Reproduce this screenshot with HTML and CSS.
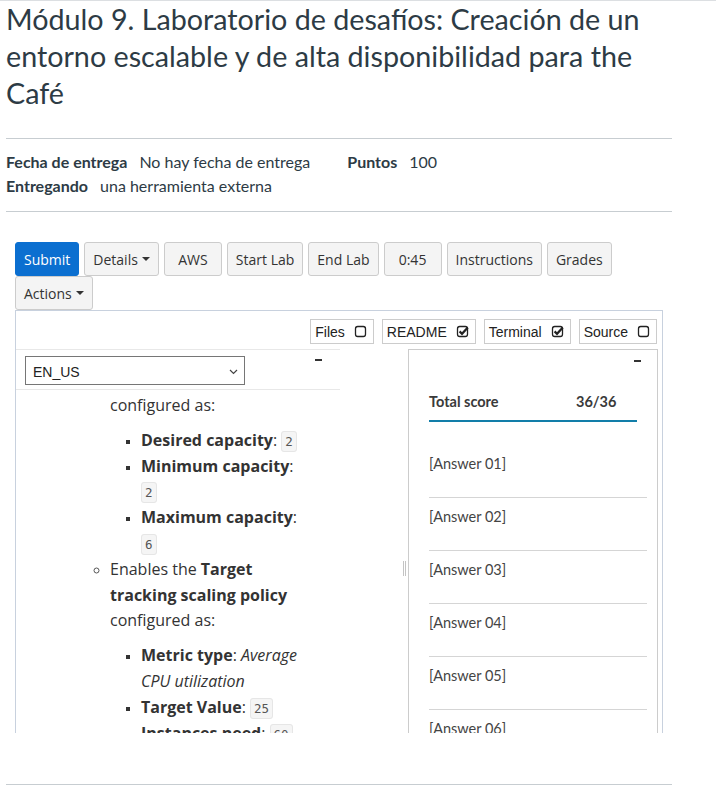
FILE: index.html
```html
<!DOCTYPE html>
<html lang="es">
<head>
<meta charset="utf-8">
<title>Módulo 9</title>
<link rel="stylesheet" href="styles.css">
</head>
<body>
<div class="page">
  <h1 class="title">Módulo 9. Laboratorio de desafíos: Creación de un entorno escalable y de alta disponibilidad para the Café</h1>
  <hr class="rule rule-top">
  <div class="meta">
    <div class="meta-row">
      <span class="meta-item"><span class="label">Fecha de entrega</span><span class="value">No hay fecha de entrega</span></span>
      <span class="meta-item"><span class="label">Puntos</span><span class="value">100</span></span>
    </div>
    <div class="meta-row">
      <span class="meta-item"><span class="label">Entregando</span><span class="value">una herramienta externa</span></span>
    </div>
  </div>
  <hr class="rule rule-mid">
  <div class="lab">
    <div class="toolbar">
      <span class="btn primary">Submit</span>
      <span class="btn">Details<span class="caret"></span></span>
      <span class="btn wide">AWS</span>
      <span class="btn">Start Lab</span>
      <span class="btn">End Lab</span>
      <span class="btn wide">0:45</span>
      <span class="btn">Instructions</span>
      <span class="btn">Grades</span>
      <span class="btn">Actions<span class="caret"></span></span>
    </div>
    <div class="frame">
      <div class="panel-bar">
        <span class="toggle">Files <svg class="cb" width="13" height="13" viewBox="0 0 13 13"><rect x="1.5" y="1.5" width="10" height="10" rx="2.2" fill="none" stroke="#222" stroke-width="1.3"/></svg></span>
        <span class="toggle">README <svg class="cb" width="13" height="13" viewBox="0 0 13 13"><rect x="1.5" y="1.5" width="10" height="10" rx="2.2" fill="none" stroke="#222" stroke-width="1.3"/><path d="M3.6 6.4 L6 8.8 L11.8 2.4" fill="none" stroke="#222" stroke-width="2.2"/></svg></span>
        <span class="toggle">Terminal <svg class="cb" width="13" height="13" viewBox="0 0 13 13"><rect x="1.5" y="1.5" width="10" height="10" rx="2.2" fill="none" stroke="#222" stroke-width="1.3"/><path d="M3.6 6.4 L6 8.8 L11.8 2.4" fill="none" stroke="#222" stroke-width="2.2"/></svg></span>
        <span class="toggle">Source <svg class="cb" width="13" height="13" viewBox="0 0 13 13"><rect x="1.5" y="1.5" width="10" height="10" rx="2.2" fill="none" stroke="#222" stroke-width="1.3"/></svg></span>
      </div>
      <div class="workspace">
        <div class="left">
          <div class="left-head">
            <div class="select"><span>EN_US</span><svg width="9" height="6" viewBox="0 0 9 6"><path d="M1 1 L4.5 4.5 L8 1" fill="none" stroke="#444" stroke-width="1.2"/></svg></div>
            <span class="dash"></span>
          </div>
          <div class="left-body">
            <ul class="l2">
              <li class="cont">configured as:
                <ul class="l3">
                  <li><b>Desired capacity</b>: <code class="code">2</code></li>
                  <li><b>Minimum capacity</b>: <code class="code">2</code></li>
                  <li><b>Maximum capacity</b>: <code class="code">6</code></li>
                </ul>
              </li>
              <li>Enables the <b>Target tracking scaling policy</b> configured as:
                <ul class="l3">
                  <li><b>Metric type</b>: <i>Average CPU utilization</i></li>
                  <li><b>Target Value</b>: <code class="code">25</code></li>
                  <li><b>Instances need</b>: <code class="code">60</code></li>
                </ul>
              </li>
            </ul>
          </div>
        </div>
        <div class="splitter"><span class="grip"></span></div>
        <div class="right">
          <div class="r-head"><span class="dash"></span></div>
          <div class="score-row"><span>Total score</span><span>36/36</span></div>
          <div class="answer first">[Answer 01]</div>
          <div class="answer">[Answer 02]</div>
          <div class="answer">[Answer 03]</div>
          <div class="answer">[Answer 04]</div>
          <div class="answer">[Answer 05]</div>
          <div class="answer">[Answer 06]</div>
        </div>
      </div>
    </div>
  </div>
  <hr class="rule rule-bottom">
</div>
</body>
</html>
```
FILE: styles.css
```css
html, body {
  margin: 0;
  padding: 0;
  background: #fff;
}
body {
  font-family: Lato, "Noto Sans", sans-serif;
  color: #2d3b45;
}
.page {
  border-top: 1px solid #dcdfe2;
  padding: 0 44px 0 6px;
}
.title {
  margin: 0;
  font-size: 28.7px;
  font-weight: 400;
  line-height: 37px;
  color: #2d3b45;
}
.rule {
  border: 0;
  border-top: 1px solid #c7cdd1;
  margin: 0;
  width: 666px;
}
.rule-top { margin-top: 26px; }
.meta {
  padding-top: 11px;
  font-size: 16px;
  line-height: 24px;
}
.meta-row { display: flex; }
.meta-item { margin-right: 37px; }
.label { font-weight: 700; margin-right: 12px; }
.rule-mid { margin-top: 13px; }
.lab {
  margin: 30px 0 0 9px;
}
.toolbar {
  display: flex;
  flex-wrap: wrap;
  gap: 0 5px;
  width: 648px;
}
.btn {
  box-sizing: border-box;
  height: 34px;
  padding: 0 8px;
  border: 1px solid #cccccc;
  border-radius: 3px;
  background: #f4f4f4;
  color: #333;
  font: 14px "Open Sans", sans-serif;
  display: inline-flex;
  align-items: center;
  justify-content: center;
}
.btn.primary {
  background: #0b6fd0;
  border-color: #0b6fd0;
  color: #fff;
}
.btn.wide { min-width: 58px; }
.caret {
  width: 0;
  height: 0;
  border-left: 4px solid transparent;
  border-right: 4px solid transparent;
  border-top: 4px solid #333;
  margin-left: 4px;
}
.frame {
  box-sizing: border-box;
  width: 648px;
  height: 423px;
  border: 1px solid #c8d1de;
  border-bottom: none;
  overflow: hidden;
}
.panel-bar {
  display: flex;
  justify-content: flex-end;
  gap: 8px;
  padding: 8px 5px 0 0;
}
.toggle {
  box-sizing: border-box;
  height: 25px;
  border: 1px solid #cccccc;
  display: flex;
  align-items: center;
  gap: 9px;
  padding: 0 6px 0 4px;
  font: 14px "Liberation Sans", Arial, sans-serif;
  color: #222;
}
.workspace {
  display: flex;
  margin-top: 5px;
  height: 400px;
}
.left { width: 388px; }
.left-head {
  box-sizing: border-box;
  width: 324px;
  height: 41px;
  border-top: 1px solid #e8e8e8;
  border-bottom: 1px solid #e8e8e8;
  display: flex;
  align-items: flex-start;
  justify-content: space-between;
  padding: 6px 18px 0 9px;
}
.select {
  box-sizing: border-box;
  width: 220px;
  height: 29px;
  border: 1px solid #767676;
  display: flex;
  align-items: center;
  justify-content: space-between;
  padding: 2px 6px 0 7px;
  font: 14px "Liberation Sans", Arial, sans-serif;
  color: #222;
}
.dash {
  display: block;
  width: 7px;
  height: 2px;
  background: #333;
  margin-top: 3px;
}
.left-body {
  padding: 3px 0 0 94px;
  font: 16px "Open Sans", sans-serif;
  line-height: 25.8px;
  color: #333;
}
.l2 {
  margin: 0;
  padding: 0;
  width: 193px;
  list-style: circle;
}
.l2 > li.cont { list-style: none; }
.l2 > li::marker { font-size: 13px; color: #555; }
.l3 {
  margin: 9px 0 0;
  padding-left: 31px;
  list-style: square;
}
.l3 > li::marker { font-size: 12px; color: #333; }
.l3 b, .l2 b { font-weight: 700; }
.code {
  font: 12.5px "DejaVu Sans Mono", monospace;
  padding: 2px 3px;
  background: #f5f5f5;
  border: 1px solid #e6e6e6;
  border-radius: 3px;
  color: #555;
}
.splitter {
  width: 4px;
  display: flex;
  flex-direction: column;
}
.grip {
  box-sizing: border-box;
  width: 3px;
  height: 15px;
  margin: 212px 0 0 -1px;
  border-left: 1px solid #c4c4c4;
  border-right: 1px solid #c4c4c4;
}
.right {
  box-sizing: border-box;
  width: 250px;
  border: 1px solid #cccccc;
  border-bottom: none;
  padding: 0 9px 0 20px;
}
.r-head {
  height: 42px;
  display: flex;
  justify-content: flex-end;
  padding-right: 7px;
}
.r-head .dash { margin-top: 10px; }
.score-row {
  display: grid;
  grid-template-columns: 147px auto;
  width: 208px;
  font-size: 14.5px;
  font-weight: 700;
  line-height: 20px;
  color: #3a3a3a;
  padding-bottom: 8px;
  border-bottom: 2px solid #127ea9;
}
.answer {
  width: 218px;
  font-size: 14.5px;
  line-height: 20px;
  color: #444;
  padding: 9px 0 23px;
  border-bottom: 1px solid #d5d5d5;
}
.answer.first { margin-top: 23px; }
.rule-bottom { margin-top: 51px; }
```
